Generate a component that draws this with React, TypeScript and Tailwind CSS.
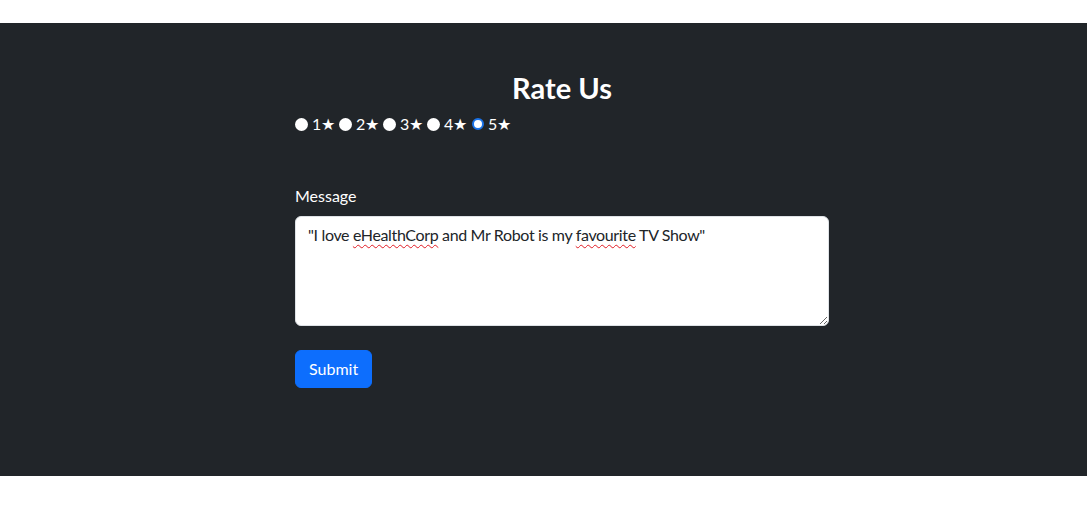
const ratings = [1, 2, 3, 4, 5];

function Squiggle({ children }: { children: React.ReactNode }) {
    return (
        <span className="underline decoration-wavy decoration-[#e01b24] decoration-1 underline-offset-[3px]">
            {children}
        </span>
    );
}

export default function App() {
    const selected = 5;

    return (
        <div
            className="min-h-screen bg-white pt-[23px]"
            style={{ fontFamily: 'Lato, "Noto Sans", sans-serif' }}
        >
            <section className="h-[453px] bg-[#212529] text-white">
                <div className="ml-[295px] w-[534px] pt-[48px]">
                    <h3 className="mb-2 text-center text-[29px] leading-[33px] font-bold">
                        Rate Us
                    </h3>

                    <div className="flex h-6 items-center text-base">
                        {ratings.map((r) => (
                            <label key={r} className="flex w-[44px] items-center">
                                {r === selected ? (
                                    <span className="ml-px h-[12px] w-[12px] rounded-full border-2 border-[#1a73e8] bg-white" />
                                ) : (
                                    <span className="h-[13px] w-[13px] rounded-full bg-white" />
                                )}
                                <span className="ml-[4px]">{r}★</span>
                            </label>
                        ))}
                    </div>

                    <div className="mt-[48px]">
                        <label className="mb-2 block text-base leading-6">
                            Message
                        </label>
                        <div className="h-[110px] resize overflow-auto rounded-[6px] border border-[#dee2e6] bg-white px-3 py-[6px] text-base leading-6 tracking-[-0.35px] text-[#212529]">
                            "I love <Squiggle>eHealthCorp</Squiggle> and Mr Robot is my{' '}
                            <Squiggle>favourite</Squiggle> TV Show"
                        </div>
                    </div>

                    <button className="mt-6 rounded-[6px] border border-[#0d6efd] bg-[#0d6efd] px-[13px] py-[6px] text-base leading-6 text-white">
                        Submit
                    </button>
                </div>
            </section>
        </div>
    );
}
